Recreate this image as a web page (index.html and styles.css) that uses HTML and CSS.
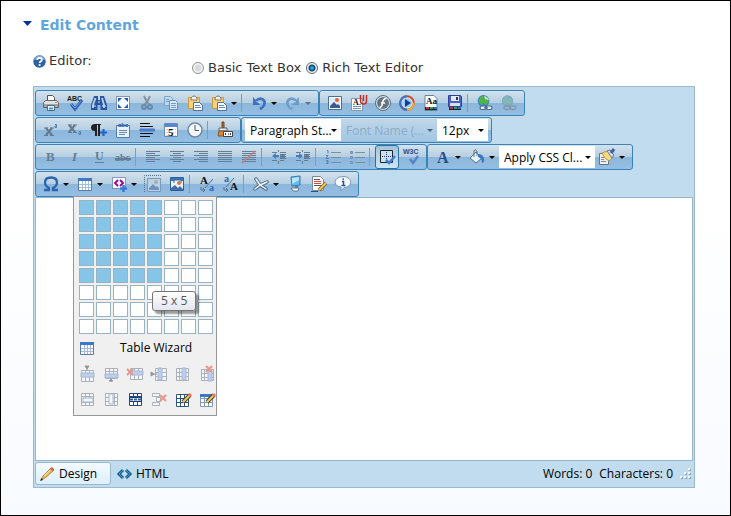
FILE: index.html
```html
<!DOCTYPE html>
<html lang="en">
<head>
<meta charset="utf-8">
<title>Edit Content</title>
<link rel="stylesheet" href="styles.css">
</head>
<body>
<main class="page">
  <h1 class="heading"><svg class="caret" viewBox="0 0 9 5"><path d="M0 0h9L4.500 5z" fill="#039"/></svg>Edit Content</h1>

  <div class="choice">
    <div class="choice-label">
      <svg class="help" viewBox="0 0 13 13"><circle cx="6.500" cy="6.500" r="6.200" fill="#2c62a3"/><path d="M1 5a5.600 5.600 0 0 1 11 0Q6 3 1 5z" fill="#7fa9d4"/><path d="M4.300 5Q4.300 2.800 6.600 2.800T8.900 4.800Q8.900 6 7.500 6.600Q6.600 7 6.600 8" fill="none" stroke="#fff" stroke-width="1.800"/><circle cx="6.600" cy="10" r="1.100" fill="#fff"/></svg>
      Editor:
    </div>
    <div class="radios">
      <label><input type="radio" name="editor">Basic Text Box</label>
      <label><input type="radio" name="editor" checked>Rich Text Editor</label>
    </div>
  </div>

  <section class="editor">
    <div class="toolbars">
      <div class="row">
        <div class="group">
          <button class="tool" aria-label="Print"><svg viewBox="0 0 16 16"><path d="M4.500 .5h5l2 2V6h-7z" fill="#fff" stroke="#555"/><path d="M2.500 5.500h11l2 2v5H.5v-5z" fill="#dfe1e3" stroke="#666"/><path d="M1 9h14v3H1z" fill="#a5a5a5"/><path d="M4.500 10.500h7v5h-7z" fill="#e9f5ff" stroke="#568"/><path d="M6 13.500h4" stroke="#2aa5d5" stroke-width="2"/><path d="M12 7.500h2" stroke="#e83"/></svg></button>
          <button class="tool" aria-label="Spell check"><svg viewBox="0 0 16 16"><text x="0" y="6" class="icon-small" font-size="7" fill="#222">ABC</text><path d="M4 9l4 5L15 5" fill="none" stroke="#3465b5" stroke-width="3"/><path d="M4 9l4 4L14 6" fill="none" stroke="#6f9be2"/></svg></button>
          <button class="tool" aria-label="Find"><svg viewBox="0 0 16 16"><path d="M3 1h4v4h2V1h4l3 9v5H9.500v-5h-3v5H0v-5z" fill="#2b559f"/><path d="M4.500 3L2 10v3M11 3l2 7v3" fill="none" stroke="#b5d1f5" stroke-width="1.800"/><path d="M7 7h2M1 11h4M11 11h4" stroke="#d2e4ff"/></svg></button>
          <button class="tool" aria-label="Select all"><svg viewBox="0 0 16 16"><path d="M1.500 1.500h13v13h-13z" fill="#f8fbff" stroke="#263d87" stroke-dasharray="1 1"/><path d="M3 3h4L3 7zM13 3H9l4 4zM3 13h4L3 9zM13 13H9l4-4z" fill="#235bb0"/></svg></button>
          <button class="tool" aria-label="Cut" disabled><svg viewBox="0 0 16 16"><path d="M5 1l3 6 3-6M8 7l-3 3M8 7l3 3" fill="none" stroke="#8293a3" stroke-width="2"/><circle cx="5" cy="12" r="2" fill="none" stroke="#6789ab" stroke-width="2"/><circle cx="11" cy="12" r="2" fill="none" stroke="#6789ab" stroke-width="2"/></svg></button>
          <button class="tool" aria-label="Copy" disabled><svg viewBox="0 0 16 16"><path d="M1.500 1.500h6l2 2v7h-8z" fill="#bfdaf0" stroke="#7ea4c8"/><path d="M6.500 5.500h6l2 2v7h-8z" fill="#d7e8f6" stroke="#6591bd"/><path d="M8 8.500h5M8 10.500h5M8 12.500h5M3 4.500h3M3 6.500h3" stroke="#719dcc"/></svg></button>
          <button class="tool" aria-label="Paste"><svg viewBox="0 0 16 16"><path d="M1.500 2.500h11v11h-11z" fill="#f6d07a" stroke="#cb9a3c"/><path d="M4 3q3-4 6 0v2H4z" fill="#f6f1df" stroke="#777"/><path d="M6.500 7.500h6l3 3v5h-9z" fill="#fff" stroke="#526f9e"/><path d="M8 10.500h5M8 12.500h6" stroke="#6688b8"/></svg></button>
          <button class="tool" aria-label="Paste special"><svg viewBox="0 0 16 16"><path d="M1.500 2.500h11v11h-11z" fill="#f6d07a" stroke="#cb9a3c"/><path d="M4 3q3-4 6 0v2H4z" fill="#f6f1df" stroke="#777"/><path d="M6.500 7.500h6l3 3v5h-9z" fill="#fff" stroke="#526f9e"/><path d="M8 10.500h5M8 12.500h6" stroke="#6688b8"/></svg></button>
          <button class="drop" aria-label="Paste options"></button>
          <span class="sep"></span>
          <button class="tool" aria-label="Undo"><svg viewBox="0 0 16 16"><path d="M5 6q3-3 6-2 4 2 2 6-1 2-4 4" fill="none" stroke="#3d71bd" stroke-width="2.800"/><path d="M2 2v8h7z" fill="#3d71bd"/><path d="M5 7q4-3 6 0 1 2-1 5" fill="none" stroke="#8bb5ee"/></svg></button>
          <button class="drop" aria-label="Undo history"></button>
          <button class="tool" aria-label="Redo" disabled><svg viewBox="0 0 16 16"><path d="M11 6Q8 3 5 4 1 6 3 10q1 2 4 4" fill="none" stroke="#6c9cc9" stroke-width="2.800"/><path d="M14 2v8H7z" fill="#6c9cc9"/><path d="M11 7Q7 4 5 7q-1 2 1 5" fill="none" stroke="#b4d2ed"/></svg></button>
          <button class="drop" aria-label="Redo history" disabled></button>
        </div>
        <div class="group">
          <button class="tool" aria-label="Image"><svg viewBox="0 0 16 16"><path d="M1.500 1.500h13v13h-13z" fill="#fff" stroke="#446f9f"/><path d="M3 3h10v7H3z" fill="#dceaf9"/><circle cx="10" cy="5" r="2" fill="#df643f"/><path d="M3 13v-2l4-4 3 3 1-1 2 2v2z" fill="#3b598f"/></svg></button>
          <button class="tool" aria-label="Document"><svg viewBox="0 0 16 16"><path d="M.5 3.500h11v12H.5z" fill="#fff" stroke="#8797a8"/><text x="2" y="10" class="icon-text" font-size="8" font-weight="bold" fill="#111">A</text><path d="M2 11.500h8M2 13.500h8M8 9.500h2" stroke="#7893aa"/><path d="M9.500 0v6q0 3 3 3t3-3V0M12.500 0v6" fill="none" stroke="#d22620" stroke-width="1.400"/></svg></button>
          <button class="tool" aria-label="Flash"><svg viewBox="0 0 16 16"><circle cx="8" cy="8" r="7.500" fill="#dce3e8" stroke="#546b7d"/><circle cx="8" cy="8" r="6" fill="#657783"/><path d="M11.500 3.500Q8 3.500 7.500 8 7 12 4.500 12.500M6 8h4" fill="none" stroke="#fff" stroke-width="1.600"/></svg></button>
          <button class="tool" aria-label="Media"><svg viewBox="0 0 16 16"><circle cx="8" cy="8" r="6.800" fill="#edf6ff" stroke="#d14b29" stroke-width="2"/><path d="M8 1.200A6.800 6.800 0 0 0 1.200 8" fill="none" stroke="#3e73c8" stroke-width="2"/><path d="M14.800 8A6.800 6.800 0 0 1 8 14.800" fill="none" stroke="#f0af28" stroke-width="2"/><path d="M8 14.800A6.800 6.800 0 0 1 1.200 8" fill="none" stroke="#366ebd" stroke-width="2"/><circle cx="8" cy="8" r="5" fill="#a3d0f5"/><path d="M6 4l6 4-6 4z" fill="#123f92"/></svg></button>
          <button class="tool" aria-label="Template"><svg viewBox="0 0 16 16"><path d="M2 .5h9l3 3v12H2z" fill="#fff" stroke="#68869f"/><text x="3" y="9" class="icon-text" font-size="9" font-weight="bold" fill="#111">Aa</text><path d="M2 12h12v3H2z" fill="#222"/><path d="M3 12h3v2H3z" fill="#c33"/><path d="M7 12h3v2H7z" fill="#2a5"/><path d="M11 12h3v2h-3z" fill="#27c"/></svg></button>
          <button class="tool" aria-label="Save template"><svg viewBox="0 0 16 16"><path d="M1.500.5h12l1 1v10h-13z" fill="#4b63c6" stroke="#2f419c"/><path d="M4 1h8v5H4z" fill="#e3eaff"/><path d="M9 2h2v3H9z" fill="#334"/><path d="M3 8h10v3H3z" fill="#d5dff8"/><path d="M2 12h12v3H2z" fill="#222"/><path d="M3 12h3v2H3z" fill="#c33"/><path d="M7 12h3v2H7z" fill="#2a5"/><path d="M11 12h3v2h-3z" fill="#27c"/></svg></button>
          <span class="sep"></span>
          <button class="tool" aria-label="Link"><svg viewBox="0 0 16 16"><circle cx="6.500" cy="6" r="5.900" fill="#3b89c6"/><path d="M2 4q2-4 5-3l-1 3 4-1 2 3-3 4-3-2-2 2-2-3z" fill="#55b443"/><path d="M7 1q4 1 5 4l-4-1z" fill="#d0f0b7"/><g fill="#e6edf3" stroke="#4d6a8a" stroke-width="1.200"><rect x="3" y="11" width="6" height="3.500" rx="1.700"/><rect x="9" y="11" width="6" height="3.500" rx="1.700"/><path d="M7 12.800h4"/></g></svg></button>
          <button class="tool" aria-label="Remove link" disabled><svg viewBox="0 0 16 16"><circle cx="6.500" cy="6" r="5.700" fill="#79a9c8"/><path d="M2 4q2-4 5-3l-1 3 4-1 2 3-3 4-3-2-2 2-2-3z" fill="#86b7b5"/><g fill="none" stroke="#8198ad" stroke-width="1.300"><rect x="3" y="11" width="6" height="3.500" rx="1.700"/><rect x="9" y="11" width="6" height="3.500" rx="1.700"/></g></svg></button>
        </div>
      </div>

      <div class="row">
        <div class="group">
          <button class="tool" aria-label="Superscript" disabled><svg viewBox="0 0 16 16"><path d="M3 6l6 7M9 6l-6 7" stroke="#62798d" stroke-width="2"/><path d="M1 6h4M7 6h4M1 13.500h4M7 13.500h4" stroke="#62798d"/><path d="M12 2.500h1.500v3H12v-1.500h1.500" fill="none" stroke="#557db0"/></svg></button>
          <button class="tool" aria-label="Subscript" disabled><svg viewBox="0 0 16 16"><path d="M2 3l6 7M8 3l-6 7" stroke="#62798d" stroke-width="2"/><path d="M1 3h4M6 3h4M1 10.500h4M6 10.500h4" stroke="#62798d"/><path d="M12 9.500h1.500v3H12V11h1.500" fill="none" stroke="#557db0"/></svg></button>
          <button class="tool" aria-label="New paragraph"><svg viewBox="0 0 16 16"><path d="M4 2h6v1H9v11H7V3H6v11H4V9Q0 9 0 5.500T4 2z" fill="#222"/><path d="M9 10.500h7M12.500 7v7" stroke="#2465c8" stroke-width="2.200"/></svg></button>
          <button class="tool" aria-label="Group box"><svg viewBox="0 0 16 16"><path d="M1.500 3.500h13v12h-13z" fill="#e8f2ff" stroke="#547baf"/><text x="3" y="5" class="icon-small" font-size="6" fill="#264fa0">abc</text><path d="M4 8.500h8M4 10.500h8M4 12.500h6" stroke="#6989b5"/></svg></button>
          <button class="tool" aria-label="Horizontal rule"><svg viewBox="0 0 16 16"><path d="M1 1.500h10M1 4.500h13M1 11.500h13M1 14.500h10" stroke="#111"/><path d="M1 7h14.500v2H1z" fill="#5288e8" stroke="#3b70c8"/></svg></button>
          <button class="tool" aria-label="Date"><svg viewBox="0 0 16 16"><path d="M1.500 1.500h13v13h-13z" fill="#fff" stroke="#6988b8"/><path d="M2 2h12v3H2z" fill="#5689d4"/><path d="M3 7.500h10M3 10.500h10M3 13.500h10" stroke="#ccd" stroke-dasharray="2 1"/><text x="5" y="14" class="icon-text" font-size="11" font-weight="bold" fill="#111">5</text></svg></button>
          <button class="tool" aria-label="Time"><svg viewBox="0 0 16 16"><circle cx="8" cy="8" r="7" fill="#f2f7fc" stroke="#7489a0" stroke-width="1.500"/><path d="M8 3v5.500h4" fill="none" stroke="#555"/></svg></button>
          <span class="sep"></span>
          <button class="tool" aria-label="Format stripper"><svg viewBox="0 0 16 16"><path d="M5 0h2v6H5z" fill="#bd6a20" stroke="#823d14"/><path d="M2 6h8v3H2z" fill="#e6edf4" stroke="#536777"/><path d="M2 9h8v5H1z" fill="#d98b3c" stroke="#8f531d"/><path d="M6.500 9.500h9v5h-9z" fill="#fff" stroke="#444"/><path d="M9 11l-1 1 1 1M13 11l1 1-1 1M11 12h1" fill="none" stroke="#333"/></svg></button>
        </div>
        <div class="group">
          <span class="select"><select aria-label="Paragraph style"><option>Paragraph St...</option></select></span>
          <span class="select select-off"><select aria-label="Font name" disabled><option>Font Name (...</option></select></span>
          <span class="select select-size"><select aria-label="Size"><option>12px</option></select></span>
        </div>
      </div>

      <div class="row">
        <div class="group">
          <button class="tool" aria-label="Bold" disabled><svg viewBox="0 0 16 16"><text x="3" y="12" class="icon-text" font-size="13" font-weight="bold">B</text></svg></button>
          <button class="tool" aria-label="Italic" disabled><svg viewBox="0 0 16 16"><text x="5" y="12" class="icon-text" font-size="13" font-weight="bold" font-style="italic">I</text></svg></button>
          <button class="tool" aria-label="Underline" disabled><svg viewBox="0 0 16 16"><text x="4" y="11" class="icon-text" font-size="12" font-weight="bold">U</text><path d="M4 13.500h9" stroke="#637e96"/></svg></button>
          <button class="tool" aria-label="Strikethrough" disabled><svg viewBox="0 0 16 16"><text x="0" y="12" class="icon-text" font-size="10" font-weight="bold">abc</text><path d="M0 10h16" stroke="#637e96" stroke-width="2"/></svg></button>
          <span class="sep"></span>
          <button class="tool" aria-label="Align left" disabled><svg viewBox="0 0 16 16"><path d="M1 2.500h14M1 4.500h9M1 6.500h14M1 8.500h9M1 10.500h14M1 12.500h9" stroke="#637e96"/></svg></button>
          <button class="tool" aria-label="Align center" disabled><svg viewBox="0 0 16 16"><path d="M1 2.500h14M4 4.500h8M1 6.500h14M4 8.500h8M1 10.500h14M4 12.500h8" stroke="#637e96"/></svg></button>
          <button class="tool" aria-label="Align right" disabled><svg viewBox="0 0 16 16"><path d="M1 2.500h14M6 4.500h9M1 6.500h14M6 8.500h9M1 10.500h14M6 12.500h9" stroke="#637e96"/></svg></button>
          <button class="tool" aria-label="Justify" disabled><svg viewBox="0 0 16 16"><path d="M1 2.500h14M1 4.500h14M1 6.500h14M1 8.500h14M1 10.500h14M1 12.500h14" stroke="#637e96"/></svg></button>
          <button class="tool" aria-label="Remove alignment" disabled><svg viewBox="0 0 16 16"><path d="M1 2.500h14M1 4.500h14M1 6.500h14M1 8.500h14M1 10.500h14M1 12.500h14" stroke="#637e96"/><path d="M1 14L14 2" stroke="#c87f78" stroke-width="1.500"/></svg></button>
          <span class="sep"></span>
          <button class="tool" aria-label="Outdent" disabled><svg viewBox="0 0 16 16"><path d="M1 3.500h5M9 3.500h6M9 5.500h6M9 7.500h6M9 9.500h6M1 11.500h5M9 11.500h4M7.500 1v2M7.500 12v3" stroke="#637e96"/><path d="M9 6h5v3H9z" fill="#637e96"/><path d="M1 7l4-3v2h3v2H5v2z" fill="#477cb4"/></svg></button>
          <button class="tool" aria-label="Indent" disabled><svg viewBox="0 0 16 16"><path d="M1 3.500h5M9 3.500h6M9 5.500h6M9 7.500h6M9 9.500h6M1 11.500h5M9 11.500h4M7.500 1v2M7.500 12v3" stroke="#637e96"/><path d="M9 6h5v3H9z" fill="#637e96"/><path d="M8 7L4 4v2H1v2h3v2z" fill="#477cb4"/></svg></button>
          <span class="sep"></span>
          <button class="tool" aria-label="Numbered list" disabled><svg viewBox="0 0 16 16"><path d="M6 3.500h10M6 8.500h10M6 13.500h10" stroke="#7890a5"/><path d="M2 1.500h1v3M1 6.500h2l-2 3h3M1 11.500h2v3H1M1.500 13H3" fill="none" stroke="#5282b5"/></svg></button>
          <button class="tool" aria-label="Bullet list" disabled><svg viewBox="0 0 16 16"><path d="M6 3.500h10M6 8.500h10M6 13.500h10" stroke="#7890a5"/><path d="M1.500 2.500h2v2h-2zM1.500 7.500h2v2h-2zM1.500 12.500h2v2h-2z" fill="#8cb2d5" stroke="#6f95b8"/></svg></button>
          <span class="sep"></span>
          <button class="tool tool-on" aria-label="Show borders"><svg viewBox="0 0 16 16"><path d="M1.500 1.500h12v12h-12z" fill="#c6e2f4" stroke="#222"/><path d="M7.500 3v10M3 7.500h10" stroke="#336" stroke-dasharray="1 1"/><path d="M7 11l3 3 6-7" fill="none" stroke="#3d7dcb" stroke-width="2.500"/></svg></button>
          <button class="tool" aria-label="Validate"><svg viewBox="0 0 16 16"><text x="0" y="5" class="icon-small" font-size="7" fill="#304b81">W3C</text><path d="M7 10l3 4 5-7" fill="none" stroke="#5583c9" stroke-width="2.500"/></svg></button>
        </div>
        <div class="group">
          <button class="tool" aria-label="Text color"><svg viewBox="0 0 16 16"><text x="2" y="14" class="icon-text" font-size="16" font-weight="bold" fill="#284c8a">A</text></svg></button>
          <button class="drop" aria-label="Text colors"></button>
          <button class="tool" aria-label="Fill color"><svg viewBox="0 0 16 16"><path d="M1 9l6-6 6 6-6 5z" fill="#eaf3fb" stroke="#526f91"/><path d="M5 8V2q2-3 3 1v4" fill="none" stroke="#5b718b"/><path d="M9 5q7 0 6 8l-2 1q0-5-4-6z" fill="#3978c5"/></svg></button>
          <button class="drop" aria-label="Fill colors"></button>
          <span class="select"><select aria-label="CSS class"><option>Apply CSS Cl...</option></select></span>
          <button class="tool" aria-label="Format painter"><svg viewBox="0 0 16 16"><path d="M.5 4.500h9v11H.5z" fill="#eee" stroke="#687580"/><path d="M2 8.500h3M2 10.500h3M2 12.500h5" stroke="#888"/><path d="M3 4l5-2 6 6-4 4q-5-2-7-8z" fill="#f3da83" stroke="#b89452"/><path d="M8 2l3-1 4 5-2 3z" fill="#d8e0e8" stroke="#66788d"/><path d="M12 4l3-4" stroke="#405fae" stroke-width="3"/></svg></button>
          <button class="drop" aria-label="Painter options"></button>
        </div>
      </div>

      <div class="row">
        <div class="group">
          <button class="tool" aria-label="Symbol"><svg viewBox="0 0 16 16"><path d="M1 14h5v-2Q2 10 2 6.500 2 1.500 8 1.500t6 5Q14 10 10 12v2h5" fill="none" stroke="#2c65ad" stroke-width="2.300"/></svg></button>
          <button class="drop" aria-label="Symbols"></button>
          <span class="menu">
            <button class="tool" aria-label="Table"><svg viewBox="0 0 16 16"><path d="M1.500 2.500h13v12h-13z" fill="#fff" stroke="#5d7ca8"/><path d="M1 2h14v3H1z" fill="#3f78c9"/><path d="M2 8.500h12M2 11.500h12M5.500 5v9M8.500 5v9M11.500 5v9" stroke="#a6bbd8"/></svg></button>
            <div class="popup">
              <div class="cells" id="cells"></div>
              <button class="wizard"><svg viewBox="0 0 16 16"><path d="M1.500 2.500h13v12h-13z" fill="#fff" stroke="#5d7ca8"/><path d="M1 2h14v3H1z" fill="#3f78c9"/><path d="M2 8.500h12M2 11.500h12M5.500 5v9M8.500 5v9M11.500 5v9" stroke="#a6bbd8"/></svg><span>Table Wizard</span></button>
              <div class="actions">
                <button class="act" aria-label="Row above" disabled><svg viewBox="0 0 16 16"><path d="M2.500 4.500h12v11h-12zM6.500 4v11M10.500 4v11" fill="#fff" stroke="#53657e"/><path d="M2 7h13v4H2z" fill="#82a8ed" stroke="#4773b8"/><path d="M6 0h4L8 3zM8 0v5" stroke="#333"/></svg></button>
                <button class="act" aria-label="Row below" disabled><svg viewBox="0 0 16 16"><path d="M2.500 2.500h12v10h-12zM6.500 2v11M10.500 2v11M2 5.500h12" fill="#fff" stroke="#53657e"/><path d="M2 8h13v4H2z" fill="#82a8ed" stroke="#4773b8"/><path d="M6 15h4L8 13zM8 12v4" stroke="#333"/></svg></button>
                <button class="act" aria-label="Delete row" disabled><svg viewBox="0 0 16 16"><path d="M3.500 2.500h12v11h-12zM7.500 2v11M11.500 2v11" fill="#fff" stroke="#53657e"/><path d="M5 5h11v4H5z" fill="#82a8ed" stroke="#4773b8"/><path d="M0 3l6 6M6 3L0 9" stroke="#e02b13" stroke-width="2"/></svg></button>
                <button class="act" aria-label="Column left" disabled><svg viewBox="0 0 16 16"><path d="M4.500 2.500h11v12h-11zM4 6.500h11M4 10.500h11" fill="#fff" stroke="#53657e"/><path d="M7 2h4v12H7z" fill="#82a8ed" stroke="#4773b8"/><path d="M0 6l3 2-3 2zM0 8h6" stroke="#333"/></svg></button>
                <button class="act" aria-label="Column right" disabled><svg viewBox="0 0 16 16"><path d="M1.500 2.500h12v12h-12zM1 6.500h12M1 10.500h12M4.500 2v12" fill="#fff" stroke="#53657e"/><path d="M7 2h4v12H7z" fill="#82a8ed" stroke="#4773b8"/></svg></button>
                <button class="act" aria-label="Delete column" disabled><svg viewBox="0 0 16 16"><path d="M2.500 3.500h12v11h-12zM2 7.500h12M2 11.500h12M5.500 3v11" fill="#fff" stroke="#53657e"/><path d="M9 5h4v10H9z" fill="#82a8ed" stroke="#4773b8"/><path d="M7 0l6 6M13 0L7 6" stroke="#e02b13" stroke-width="2"/></svg></button>
                <button class="act" aria-label="Merge across" disabled><svg viewBox="0 0 16 16"><path d="M2.500 1.500h12v12h-12zM2 4.500h12M2 10.500h12M6.500 1v12M10.500 1v12" fill="#fff" stroke="#53657e"/><path d="M4 6h10v4H4z" fill="#fff" stroke="#4773b8"/></svg></button>
                <button class="act" aria-label="Merge down" disabled><svg viewBox="0 0 16 16"><path d="M2.500 1.500h12v12h-12zM2 5.500h12M2 9.500h12M11.500 1v12" fill="#fff" stroke="#53657e"/><path d="M6 2h4v10H6z" fill="#fff" stroke="#4773b8"/></svg></button>
                <button class="act" aria-label="Split cell"><svg viewBox="0 0 16 16"><path d="M2.500 1.500h12v12h-12zM2 4.500h12M6.500 1v12M10.500 1v12" fill="#fff" stroke="#294a79"/><path d="M2.500 5.500h12v4h-12z" fill="#fff" stroke="#143d87"/><path d="M3 7.500h11" stroke="#315ca8" stroke-width="2" stroke-dasharray="3 1"/></svg></button>
                <button class="act" aria-label="Delete cell" disabled><svg viewBox="0 0 16 16"><path d="M1.500 1.500h7v3h-7zM1.500 10.500h7v3h-7zM5.500 5.500h4v4h-4z" fill="#fff" stroke="#53657e"/><path d="M9 3l6 6M15 3l-6 6" stroke="#e02b13" stroke-width="2"/></svg></button>
                <button class="act" aria-label="Cell properties"><svg viewBox="0 0 16 16"><path d="M1.500 2.500h12v12h-12zM1 6.500h12M1 10.500h12M5.500 2v12M9.500 2v12" fill="#fff" stroke="#315277"/><path d="M5.500 6.500h4v4h-4z" fill="#fff" stroke="#174ba0"/><path d="M8 10l7-7" stroke="#514624" stroke-width="4"/><path d="M8 10l7-7" stroke="#efc964" stroke-width="2"/><path d="M14 4l2-2" stroke="#e77a6b" stroke-width="3"/></svg></button>
                <button class="act" aria-label="Table properties"><svg viewBox="0 0 16 16"><path d="M1.500 2.500h12v12h-12zM1 6.500h12M1 10.500h12M5.500 2v12M9.500 2v12" fill="#fff" stroke="#8099bb"/><path d="M1 2h13v3H1z" fill="#3f78c9"/><path d="M8 10l7-7" stroke="#514624" stroke-width="4"/><path d="M8 10l7-7" stroke="#efc964" stroke-width="2"/><path d="M14 4l2-2" stroke="#e77a6b" stroke-width="3"/></svg></button>
              </div>
              <span class="tip" role="tooltip">5 x 5</span>
            </div>
          </span>
          <button class="drop" aria-label="Table options"></button>
          <button class="tool" aria-label="Snippet"><svg viewBox="0 0 16 16"><path d="M1.500 1.500h13v11h-13z" fill="#f5faff" stroke="#314d88" stroke-dasharray="1 1"/><path d="M7 4L4 7l3 3M9 4l3 3-3 3" fill="none" stroke="#a00092" stroke-width="1.800"/><path d="M9 12.500h7M12.500 9v7" stroke="#3977d2" stroke-width="2.500"/></svg></button>
          <button class="drop" aria-label="Snippets"></button>
          <button class="tool" aria-label="Image map" disabled><svg viewBox="0 0 16 16"><path d="M-.5 16V-.5H16" fill="none" stroke="#55728c" stroke-dasharray="1 1"/><path d="M2.500 2.500h13v13h-13z" fill="#b8d2e7" stroke="#7899b6"/><circle cx="11" cy="6" r="2" fill="#b8a7a5"/><path d="M4 14v-2l4-4 3 3 1-1 2 2v2z" fill="#7192bb"/></svg></button>
          <button class="tool" aria-label="Image editor"><svg viewBox="0 0 16 16"><path d="M1.500 1.500h13v13h-13z" fill="#eaf5ff" stroke="#315f9c"/><path d="M2 2h12v3H2z" fill="#3a77c2"/><path d="M5 7V4h7v3" fill="#fff" stroke="#315f9c"/><circle cx="10" cy="7" r="2" fill="#e17432"/><path d="M2 14v-2l4-3 3 3 2-2 3 3v1z" fill="#486cab"/></svg></button>
          <span class="sep"></span>
          <button class="tool" aria-label="Lower case"><svg viewBox="0 0 16 16"><text x="1" y="8" class="icon-text" font-size="11" font-weight="bold" fill="#111">A</text><text x="10" y="15" class="icon-text" font-size="10" font-weight="bold" fill="#2868bd">a</text><path d="M6 12l8-9" stroke="#57708d"/><path d="M2 11v3h4M4 12l2 2-2 2" fill="none" stroke="#57708d"/></svg></button>
          <button class="tool" aria-label="Upper case"><svg viewBox="0 0 16 16"><text x="1" y="6" class="icon-text" font-size="10" font-weight="bold" fill="#2868bd">a</text><text x="7" y="14" class="icon-text" font-size="11" font-weight="bold" fill="#111">A</text><path d="M3 11l8-9" stroke="#57708d"/><path d="M1 11v3h4M3 12l2 2-2 2" fill="none" stroke="#57708d"/></svg></button>
          <span class="sep"></span>
          <button class="tool" aria-label="Module"><svg viewBox="0 0 16 16"><g fill="none" stroke-linecap="round"><path d="M3 3l4 6 7-3M7 9l-5 4M7 9l6 4" stroke="#526a81" stroke-width="3.500"/><path d="M3 3l4 6 7-3M7 9l-5 4M7 9l6 4" stroke="#f3f7fa" stroke-width="1.500"/></g></svg></button>
          <button class="drop" aria-label="Modules"></button>
          <button class="tool" aria-label="Full screen"><svg viewBox="0 0 16 16"><path d="M4 1l9-1v9l-8 1z" fill="#62bdf2" stroke="#3f77a5"/><path d="M5 2l7-1v3L5 8z" fill="#b6e7ff"/><path d="M8 10h3v3H8z" fill="#607c96"/><path d="M4 12h8l-1 3H6z" fill="#f1f4f7" stroke="#607c96"/></svg></button>
          <button class="tool" aria-label="Track changes"><svg viewBox="0 0 16 16"><path d="M1.500.5h8l3 3v11h-11z" fill="#fff" stroke="#78899a"/><path d="M3 3.500h6M3 9.500h7" stroke="#555"/><path d="M3 5.500h7M3 7.500h7" stroke="#d64538"/><path d="M8 14l7-7" stroke="#7a5425" stroke-width="3.500"/><path d="M8 14l7-7" stroke="#f4c84e" stroke-width="2"/><path d="M0 15.500h7" stroke="#245796"/></svg></button>
          <button class="tool" aria-label="About"><svg viewBox="0 0 16 16"><path d="M8 .5c10 0 10 11 1 11l-3 3.500v-4C-3 10-1 .5 8 .5z" fill="#f4f9ff" stroke="#7f93b0"/><path d="M7 5.500h1.500v4M6.500 9.500h4M7.500 3h1.500" fill="none" stroke="#31538e" stroke-width="1.500"/></svg></button>
        </div>
      </div>
    </div>

    <div class="canvas" contenteditable="true" aria-label="Content"></div>

    <footer class="status">
      <div class="modes">
        <button class="mode mode-on"><svg viewBox="0 0 16 16"><path d="M1 14l2-4 8-8 3 2-9 8z" fill="#f2bf53" stroke="#a97d44"/><path d="M4 10l7-7" stroke="#fff0aa"/><path d="M10 3l2-2 2 2-2 2z" fill="#d75a51"/><path d="M0 15l1.500-3L3 14z" fill="#222"/></svg>Design</button>
        <button class="mode"><svg viewBox="0 0 16 16"><path d="M6 4L2 8l4 4M9 4l4 4-4 4" fill="none" stroke="#175b8c" stroke-width="3"/><path d="M6 4L2 8l4 4M9 4l4 4-4 4" fill="none" stroke="#3ba0d3"/></svg>HTML</button>
      </div>
      <div class="counts"><span>Words: 0</span><span>Characters: 0</span><svg class="grip" viewBox="0 0 11 11"><path d="M9 1h2v2H9zM5 5h2v2H5zM9 5h2v2H9zM1 9h2v2H1zM5 9h2v2H5zM9 9h2v2H9z" fill="#8fa9bc"/><path d="M8 0h2v2H8zM4 4h2v2H4zM8 4h2v2H8zM0 8h2v2H0zM4 8h2v2H4zM8 8h2v2H8z" fill="#fff"/></svg></div>
    </footer>
  </section>
</main>
<script src="grid.js"></script>
</body>
</html>
```
FILE: styles.css
```css
* { box-sizing: border-box; }

body {
  margin: 0;
  font-family: "DejaVu Sans", Verdana, sans-serif;
  font-size: 13px;
  color: #333;
}

button {
  margin: 0;
  padding: 0;
  border: 0;
  background: none;
  font: inherit;
  color: inherit;
}

svg { display: block; flex: none; }

.page {
  min-height: 100vh;
  padding: 15px 35px 27px 32px;
  border: 1px solid #000;
  background: linear-gradient(#fff 40%, #f7faff);
}

.heading {
  display: flex;
  align-items: center;
  gap: 8px;
  margin: 0 0 0 -10px;
  font-size: 14px;
  line-height: 18px;
  color: #5fa6dc;
}

.caret { width: 9px; height: 5px; margin-bottom: 3px; }

.choice { display: grid; grid-template-columns: 159px 1fr; height: 52px; }

.choice-label {
  display: flex;
  align-items: center;
  align-self: start;
  gap: 3px;
  padding-top: 18px;
  line-height: 18px;
}

.help { width: 13px; height: 13px; }

.radios { display: flex; align-items: start; gap: 5px; padding-top: 25px; line-height: 18px; }
.radios label { display: flex; align-items: center; gap: 4px; }

.radios input {
  appearance: none;
  width: 12px;
  height: 12px;
  margin: 0;
  border: 1px solid #8e8f8f;
  border-radius: 50%;
  background: radial-gradient(circle, #d5d8dc 35%, #f6f6f6 60%);
}

.radios input:checked {
  border-color: #5b6670;
  background: radial-gradient(circle, #2aa4de 0 1px, #0b3d66 3px, #f4f4f4 4px);
}

.editor {
  border: 1px solid #9ab9cf;
  background: #c1dcef;
  font-family: "Open Sans", "Segoe UI", sans-serif;
  font-size: 12px;
  color: #000;
}

.toolbars { display: grid; gap: 1px; padding: 3px 1px 0; }
.row { display: flex; }

.group {
  display: flex;
  align-items: center;
  height: 26px;
  padding: 0 3px;
  border: 1px solid #3b82b8;
  border-radius: 3px;
  background: linear-gradient(#d3e2ec, #b6cfe2 48%, #8cb7dc 50%, #94bee2);
}

.tool {
  display: grid;
  place-items: center;
  width: 24px;
  height: 24px;
}

.tool svg, .wizard svg, .act svg, .mode svg { width: 16px; height: 16px; overflow: visible; }

.tool-on {
  border: 1px solid #2f6f9f;
  border-radius: 3px;
  background: linear-gradient(#9fc3dc, #cbe6f5);
}

.icon-text { font-family: "Liberation Serif", serif; }
.icon-small { font-family: "Liberation Sans", sans-serif; font-weight: bold; }
.tool:disabled .icon-text { fill: #637e96; }

.drop { display: grid; place-items: center start; width: 10px; height: 22px; }

.drop::after, .select::after {
  content: "";
  border: 3px solid transparent;
  border-top-color: #000;
  border-bottom: 0;
}

.drop:disabled::after { border-top-color: #59758d; }

.sep { width: 6px; height: 18px; border-left: 1px solid #6da1c9; }

.select {
  display: grid;
  grid-template-columns: 1fr 10px;
  align-items: center;
  width: 96px;
  height: 22px;
  background: #fff;
}

.select select {
  appearance: none;
  grid-area: 1 / 1 / 2 / 3;
  width: 100%;
  height: 22px;
  padding: 0 0 0 5px;
  border: 0;
  background: none;
  font: inherit;
  color: #000;
}

.select::after { grid-area: 1 / 2; justify-self: start; pointer-events: none; }
.select-size { width: 51px; }
.select-off { background: linear-gradient(#bfd7e9, #a2c6e3); }
.select-off select:disabled { color: #8dabc5; opacity: 1; }
.select-off::after { border-top-color: #49657d; }

.menu { position: relative; }

.popup {
  position: absolute;
  top: 24px;
  left: 0;
  z-index: 1;
  width: 144px;
  padding: 3px 0 2px 5px;
  border: 1px solid #979797;
  background: #f0f0f0;
}

.cells {
  display: grid;
  grid-template-columns: repeat(8, 15px);
  gap: 2px;
}

.cell { height: 15px; border: 1px solid #9ab3c3; background: #fff; }
.cell-on { background: #87c5e8; }

.wizard {
  display: flex;
  align-items: center;
  gap: 25px;
  width: 100%;
  height: 27px;
}

.actions {
  display: grid;
  grid-template-columns: repeat(6, 16px);
  grid-auto-rows: 26px;
  column-gap: 8px;
  align-items: center;
}

.act:disabled { opacity: .45; }

.tip {
  position: absolute;
  top: 94px;
  left: 78px;
  padding: 0 8px;
  border: 1px solid #767676;
  border-radius: 3px;
  background: linear-gradient(#fff, #e4e5f0);
  box-shadow: 3px 3px 2px #0006;
  line-height: 18px;
  color: #575757;
}

.canvas {
  height: 264px;
  margin: 0 1px;
  border: 1px solid #9ab3c6;
  background: #fff;
}

.status {
  display: flex;
  justify-content: space-between;
  align-items: center;
  padding: 1px 3px 2px 1px;
}

.modes { display: flex; gap: 1px; }

.mode {
  display: flex;
  align-items: center;
  gap: 3px;
  height: 23px;
  padding: 0 4px;
  border: 1px solid transparent;
  border-radius: 3px;
}

.mode-on {
  width: 76px;
  border-color: #9ab9cf;
  background: linear-gradient(#f3fafe, #dcf0fb);
}

.counts { display: flex; align-items: center; gap: 7px; }
.grip { width: 11px; height: 11px; }
```
FILE: grid.js
```js
const cells = document.getElementById("cells");
for (let row = 1; row <= 8; row++) {
  for (let column = 1; column <= 8; column++) {
    const cell = document.createElement("button");
    cell.className = row <= 5 && column <= 5 ? "cell cell-on" : "cell";
    cell.setAttribute("aria-label", row + " by " + column);
    cells.append(cell);
  }
}
```
